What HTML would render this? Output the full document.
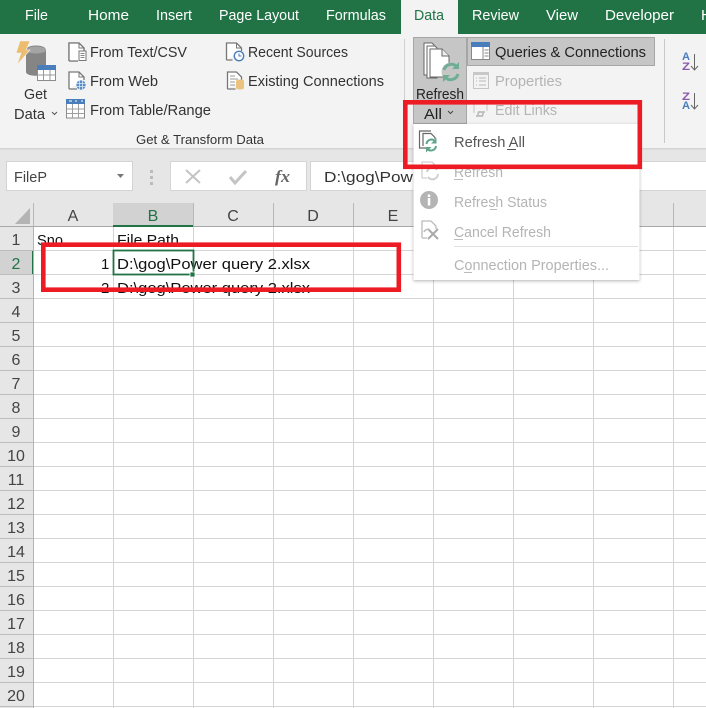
<!DOCTYPE html>
<html>
<head>
<meta charset="utf-8">
<style>
html,body{margin:0;padding:0;background:#fff;width:706px;height:708px;overflow:hidden}
svg{display:block}
text{font-family:"Liberation Sans",sans-serif;font-size:15px;fill:#333;white-space:pre}
.t{fill:#fff}
.g{fill:#b4b4b4}
.c{fill:#111;font-size:15px}
.h{fill:#444;font-size:16px}
</style>
</head>
<body>
<svg width="706" height="708" viewBox="0 0 706 708" xmlns="http://www.w3.org/2000/svg">
<defs>
<filter id="sh" x="-5%" y="-5%" width="110%" height="110%"><feDropShadow dx="0" dy="1" stdDeviation="1.5" flood-color="#000" flood-opacity=".3"/></filter>
</defs>
<rect width="706" height="708" fill="#fff"/>
<!-- title tabs -->
<rect width="706" height="34" fill="#217346"/>
<rect x="401" width="57" height="34" fill="#f3f3f3"/>
<text class="t" x="25" y="20" textLength="23" lengthAdjust="spacingAndGlyphs">File</text>
<text class="t" x="88" y="20" textLength="41" lengthAdjust="spacingAndGlyphs">Home</text>
<text class="t" x="156" y="20" textLength="36" lengthAdjust="spacingAndGlyphs">Insert</text>
<text class="t" x="219" y="20" textLength="80" lengthAdjust="spacingAndGlyphs">Page Layout</text>
<text class="t" x="326" y="20" textLength="60" lengthAdjust="spacingAndGlyphs">Formulas</text>
<text x="414" y="20" textLength="30" lengthAdjust="spacingAndGlyphs" style="fill:#217346">Data</text>
<text class="t" x="472" y="20" textLength="47" lengthAdjust="spacingAndGlyphs">Review</text>
<text class="t" x="546" y="20" textLength="32" lengthAdjust="spacingAndGlyphs">View</text>
<text class="t" x="605" y="20" textLength="69" lengthAdjust="spacingAndGlyphs">Developer</text>
<text class="t" x="701" y="20">H</text>
<!-- ribbon -->
<rect y="34" width="706" height="114" fill="#f3f3f3"/>
<rect y="148" width="706" height="1.5" fill="#d4d4d4"/>
<rect y="149.500" width="706" height="53.500" fill="#e6e6e6"/>
<!-- get data icon -->
<path d="M26 50c0-6 20-6 20 0v22c0 5-20 5-20 0z" fill="#858585"/>
<ellipse cx="36" cy="50" rx="10" ry="3.500" fill="#a4a4a4"/>
<path d="M20 41H30L26 50H30L17 65L21 53H16Z" fill="#ecbd6f" stroke="#f3f3f3" stroke-width=".6"/>
<rect x="37.500" y="65.500" width="18" height="15" fill="#fff" stroke="#8c8c8c"/>
<rect x="37" y="65" width="19" height="5" fill="#4a7ebb"/>
<path d="M37 75h19M43.500 70v10M50 70v10" stroke="#999" fill="none"/>
<text x="24" y="99" textLength="23" lengthAdjust="spacingAndGlyphs">Get</text>
<text x="14" y="119" textLength="31" lengthAdjust="spacingAndGlyphs">Data</text>
<path d="M52 112l2.500 2.500 2.500-2.500" stroke="#555" fill="none"/>
<!-- small doc icons -->
<path d="M69 61V43h10l5 5v3M69 61h9" fill="#fff" stroke="#777" stroke-width="1.300"/>
<path d="M69 43h10l5 5v3h-5v10h-10z" fill="#fff"/>
<path d="M69 61V43h10l5 5v3M69 61h9" fill="none" stroke="#777" stroke-width="1.300"/>
<path d="M79 43v5h5" fill="none" stroke="#777"/>
<rect x="79" y="51" width="7" height="9.500" fill="#fff" stroke="#777"/>
<path d="M80.500 53.500h4M80.500 55.500h4M80.500 57.500h4" stroke="#888"/>
<path d="M69 89V72h10l5 5v3M69 89h8" fill="#fff" stroke="#777" stroke-width="1.300"/>
<path d="M79 72v5h5" fill="none" stroke="#777"/>
<circle cx="81" cy="85" r="4.700" fill="#5a8ec7"/>
<path d="M76.500 83.500h9M76.500 86.500h9M79.500 80.500v9M82.500 80.500v9" stroke="#dbe7f3" stroke-width=".8"/>
<rect x="66.500" y="99.500" width="18" height="18.500" fill="#fff" stroke="#8a8a8a"/>
<rect x="66" y="99" width="19" height="5" fill="#4a7ebb"/>
<path d="M66.500 109h18M66.500 113.500h18M72.500 104v14M78.500 104v14" stroke="#a0a0a0" fill="none"/>
<path d="M69 101l3 0M75 101h2M81 101h2" stroke="#fff"/>
<text x="90" y="57" textLength="97" lengthAdjust="spacingAndGlyphs">From Text/CSV</text>
<text x="90" y="86" textLength="68" lengthAdjust="spacingAndGlyphs">From Web</text>
<text x="90" y="115" textLength="121" lengthAdjust="spacingAndGlyphs">From Table/Range</text>
<path d="M226.500 60V43h10l5 5v3M226.500 60h6" fill="#fff" stroke="#777" stroke-width="1.300"/>
<path d="M236.500 43v5h5" fill="none" stroke="#777"/>
<circle cx="239" cy="56" r="4.700" fill="#fff" stroke="#4a7ebb" stroke-width="1.400"/>
<path d="M239 53.500V56h2.500" stroke="#4a7ebb" fill="none"/>
<path d="M227.500 89V72h9l5 5v3M227.500 89h8" fill="#fff" stroke="#777" stroke-width="1.300"/>
<path d="M230 76h5M230 79h8M230 82h5M230 85h5" stroke="#999"/>
<path d="M236 81c0-2 8-2 8 0v7c0 2-8 2-8 0z" fill="#ebc37e"/>
<text x="248" y="57" textLength="100" lengthAdjust="spacingAndGlyphs">Recent Sources</text>
<text x="248" y="86" textLength="136" lengthAdjust="spacingAndGlyphs">Existing Connections</text>
<text x="136" y="144" textLength="128" lengthAdjust="spacingAndGlyphs" style="font-size:13px">Get &amp; Transform Data</text>
<rect x="404" y="39" width="1" height="104" fill="#d0d0d0"/>
<rect x="664" y="39" width="1" height="104" fill="#c8c8c8"/>
<!-- refresh button -->
<rect x="413.500" y="37.500" width="53" height="86" fill="#c6c6c6" stroke="#a6a6a6"/>
<rect x="414" y="103" width="52" height="1" fill="#a6a6a6"/>
<path d="M424 43h8l2 2v30h-10z" fill="#fff" stroke="#666"/>
<path d="M427 46h8l2 2v30h-10z" fill="#fff" stroke="#666"/>
<path d="M430 49h12l7 7v21h-19z" fill="#fff" stroke="#666" stroke-linejoin="round"/>
<path d="M442 49v7h7" fill="#eee" stroke="#666"/>
<circle cx="451" cy="72" r="9.500" fill="#c6c6c6"/>
<path d="M444 70a7.500 7.500 0 0 1 13-3M458 74a7.500 7.500 0 0 1-13 3" stroke="#6fae95" stroke-width="3" fill="none"/>
<path d="M459 62v7h-7zM443 82v-7h7z" fill="#6fae95"/>
<text x="416" y="99" textLength="48" lengthAdjust="spacingAndGlyphs" style="fill:#222">Refresh</text>
<text x="424" y="119" textLength="18" lengthAdjust="spacingAndGlyphs" style="fill:#222">All</text>
<path d="M448 111l2.500 2.500 2.500-2.500" stroke="#444" fill="none"/>
<!-- queries -->
<rect x="467.500" y="37.500" width="187" height="28" fill="#c6c6c6" stroke="#a6a6a6"/>
<rect x="471.500" y="42.500" width="18" height="17" fill="#fff" stroke="#888"/>
<rect x="471" y="42" width="19" height="5" fill="#4a7ebb"/>
<path d="M483 47v12M484.500 50h4M484.500 53h4M484.500 56h4" stroke="#888" fill="none"/>
<text x="495" y="57" textLength="151" lengthAdjust="spacingAndGlyphs" style="fill:#222">Queries &amp; Connections</text>
<rect x="473.500" y="72.500" width="15" height="16" fill="#f3f3f3" stroke="#c4c4c4"/>
<rect x="473" y="72" width="16" height="3" fill="#c8c8c8"/>
<path d="M476 78h1M476 81h1M476 85h1M479 78h7M479 81h7M479 85h7" stroke="#b8b8b8"/>
<text class="g" x="495" y="86" textLength="67" lengthAdjust="spacingAndGlyphs">Properties</text>
<path d="M474 101v12M487 101v10" fill="none" stroke="#c4c4c4"/>
<path d="M476 116h5a2 2 0 0 0 0-4h-3M485 112h-5a2 2 0 0 0 0 4h3" fill="none" stroke="#bdbdbd" stroke-width="1.800"/>
<text class="g" x="495" y="115" textLength="62" lengthAdjust="spacingAndGlyphs">Edit Links</text>
<!-- sort icons -->
<text x="682" y="60" style="font-size:11px;font-weight:bold;fill:#4a7ebb" textLength="8" lengthAdjust="spacingAndGlyphs">A</text>
<text x="682" y="70" style="font-size:11px;font-weight:bold;fill:#8a5aa8" textLength="8" lengthAdjust="spacingAndGlyphs">Z</text>
<path d="M694.500 54v16M691 66l3.500 4 3.500-4" stroke="#666" fill="none"/>
<text x="682" y="100" style="font-size:11px;font-weight:bold;fill:#8a5aa8" textLength="8" lengthAdjust="spacingAndGlyphs">Z</text>
<text x="682" y="109" style="font-size:11px;font-weight:bold;fill:#4a7ebb" textLength="8" lengthAdjust="spacingAndGlyphs">A</text>
<path d="M694.500 93v16M691 105l3.500 4 3.500-4" stroke="#666" fill="none"/>
<!-- formula bar -->
<rect x="6.500" y="161.500" width="126" height="29" fill="#fff" stroke="#d4d4d4"/>
<text x="14" y="182" textLength="33" lengthAdjust="spacingAndGlyphs" style="fill:#444">FileP</text>
<path d="M117 174h7l-3.500 4z" fill="#777"/>
<path d="M150 170h3v3h-3zM150 176h3v3h-3zM150 182h3v3h-3z" fill="#bbb"/>
<rect x="170.500" y="161.500" width="136" height="29" fill="#fff" stroke="#d4d4d4"/>
<path d="M186 170l14 13M200 170l-14 13" stroke="#c4c4c4" stroke-width="2" fill="none"/>
<path d="M230 177l5 6 11-12" stroke="#c4c4c4" stroke-width="3" fill="none"/>
<text x="275" y="182" style="font-family:'Liberation Serif',serif;font-style:italic;font-weight:bold;font-size:17px;fill:#666" textLength="15" lengthAdjust="spacingAndGlyphs">fx</text>
<rect x="310.500" y="161.500" width="400" height="29" fill="#fff" stroke="#d4d4d4"/>
<text x="324" y="182" textLength="89" lengthAdjust="spacingAndGlyphs" style="fill:#333">D:\gog\Pow</text>
<!-- column header -->
<rect y="203" width="706" height="24" fill="#e6e6e6"/>
<rect x="113" y="203" width="80" height="23" fill="#d2d2d2"/>
<rect x="113" y="225" width="80" height="2" fill="#217346"/>
<path d="M30 224V208L15 224z" fill="#b4b4b4"/>
<path d="M33.500 203V226M193.500 203V226M273.500 203V226M353.500 203V226M433.500 203V226M513.500 203V226M593.500 203V226M673.500 203V226" stroke="#b8b8b8"/>
<rect y="226" width="113" height="1" fill="#a8a8a8"/>
<rect x="193" y="226" width="513" height="1" fill="#a8a8a8"/>
<!-- row header -->
<rect y="227" width="33" height="481" fill="#e6e6e6"/>
<rect y="250" width="33" height="24" fill="#d2d2d2"/>
<rect x="32" y="250" width="2" height="24" fill="#217346"/>
<!-- grid -->
<path d="M113.500 227V708M193.500 227V708M273.500 227V708M353.500 227V708M433.500 227V708M513.500 227V708M593.500 227V708M673.500 227V708" stroke="#d4d4d4"/>
<path d="M33 250.500H706M33 274.500H706M33 298.500H706M33 322.500H706M33 346.500H706M33 370.500H706M33 394.500H706M33 418.500H706M33 442.500H706M33 466.500H706M33 490.500H706M33 514.500H706M33 538.500H706M33 562.500H706M33 586.500H706M33 610.500H706M33 634.500H706M33 658.500H706M33 682.500H706M33 706.500H706" stroke="#d4d4d4"/>
<path d="M0 250.500H33M0 274.500H33M0 298.500H33M0 322.500H33M0 346.500H33M0 370.500H33M0 394.500H33M0 418.500H33M0 442.500H33M0 466.500H33M0 490.500H33M0 514.500H33M0 538.500H33M0 562.500H33M0 586.500H33M0 610.500H33M0 634.500H33M0 658.500H33M0 682.500H33M0 706.500H33" stroke="#bdbdbd"/>
<rect x="33" y="227" width="1" height="481" fill="#b4b4b4"/>
<!-- headers text -->
<g>
<text class="h" x="73" y="221" text-anchor="middle">A</text>
<text class="h" x="153" y="221" text-anchor="middle" style="fill:#217346">B</text>
<text class="h" x="233" y="221" text-anchor="middle">C</text>
<text class="h" x="313" y="221" text-anchor="middle">D</text>
<text class="h" x="393" y="221" text-anchor="middle">E</text>
<text class="h" x="16" y="245" text-anchor="middle">1</text>
<text class="h" x="16" y="269" text-anchor="middle" style="fill:#217346">2</text>
<text class="h" x="16" y="293" text-anchor="middle">3</text>
<text class="h" x="16" y="317" text-anchor="middle">4</text>
<text class="h" x="16" y="341" text-anchor="middle">5</text>
<text class="h" x="16" y="365" text-anchor="middle">6</text>
<text class="h" x="16" y="389" text-anchor="middle">7</text>
<text class="h" x="16" y="413" text-anchor="middle">8</text>
<text class="h" x="16" y="437" text-anchor="middle">9</text>
<text class="h" x="16" y="461" text-anchor="middle">10</text>
<text class="h" x="16" y="485" text-anchor="middle">11</text>
<text class="h" x="16" y="509" text-anchor="middle">12</text>
<text class="h" x="16" y="533" text-anchor="middle">13</text>
<text class="h" x="16" y="557" text-anchor="middle">14</text>
<text class="h" x="16" y="581" text-anchor="middle">15</text>
<text class="h" x="16" y="605" text-anchor="middle">16</text>
<text class="h" x="16" y="629" text-anchor="middle">17</text>
<text class="h" x="16" y="653" text-anchor="middle">18</text>
<text class="h" x="16" y="677" text-anchor="middle">19</text>
<text class="h" x="16" y="701" text-anchor="middle">20</text>
</g>
<!-- cells -->
<text class="c" x="37" y="245" textLength="26" lengthAdjust="spacingAndGlyphs">Sno</text>
<text class="c" x="117" y="245" textLength="62" lengthAdjust="spacingAndGlyphs">File Path</text>
<text class="c" x="117" y="269" textLength="193" lengthAdjust="spacingAndGlyphs">D:\gog\Power query 2.xlsx</text>
<text class="c" x="101" y="269">1</text>
<text class="c" x="101" y="293">2</text>
<text class="c" x="117" y="293" textLength="193" lengthAdjust="spacingAndGlyphs">D:\gog\Power query 2.xlsx</text>
<rect x="113.500" y="250.500" width="80" height="24" fill="none" stroke="#217346" stroke-width="1.800"/>
<rect x="190" y="272" width="5" height="5" fill="#217346" stroke="#fff" stroke-width=".8"/>
<!-- dropdown menu -->
<rect x="413.500" y="124" width="226" height="156" fill="#fff" filter="url(#sh)"/>
<path d="M431 131H419.500V148H426" fill="none" stroke="#666" stroke-width="1.200"/>
<path d="M423 146V133.500H431L435 137.500V139" fill="none" stroke="#666" stroke-width="1.200"/>
<path d="M426.500 144a5 5 0 0 1 8.500-3M436 146a5 5 0 0 1-8.500 3" stroke="#5fa58a" stroke-width="2" fill="none"/>
<path d="M436.500 138v5.500h-5.500zM426 152.500v-5.500h5.500z" fill="#5fa58a"/>
<text x="454" y="147" textLength="71" lengthAdjust="spacingAndGlyphs" style="fill:#555">Refresh All</text>
<rect x="507" y="149" width="9" height="1" fill="#555"/>
<path d="M422 178v-16h10l4 4v2M422 178h5" fill="none" stroke="#cfcfcf" stroke-width="1.300"/>
<path d="M427 172a5.500 5.500 0 0 1 10-2M438 174a5.500 5.500 0 0 1-10 3" stroke="#cfcfcf" stroke-width="2" fill="none"/>
<text class="g" x="454" y="177" textLength="49" lengthAdjust="spacingAndGlyphs">Refresh</text>
<rect x="454" y="179" width="9" height="1" fill="#bbb"/>
<circle cx="429" cy="200" r="9" fill="#b4b4b4"/>
<rect x="427.800" y="198" width="2.500" height="7.500" fill="#fff"/>
<rect x="427.800" y="194.500" width="2.500" height="2.500" fill="#fff"/>
<text class="g" x="454" y="207" textLength="93" lengthAdjust="spacingAndGlyphs">Refresh Status</text>
<rect x="490" y="209" width="7" height="1" fill="#bbb"/>
<path d="M422 238v-17h9l5 5v3M422 238h5" fill="none" stroke="#bbb" stroke-width="1.300"/>
<path d="M428 229l10 10M438 229l-10 10" stroke="#aaa" stroke-width="2"/>
<path d="M424 232a4 4 0 0 1 6-2" stroke="#bbb" stroke-width="1.500" fill="none"/>
<text class="g" x="454" y="237" textLength="97" lengthAdjust="spacingAndGlyphs">Cancel Refresh</text>
<rect x="454" y="239" width="9" height="1" fill="#bbb"/>
<rect x="454" y="246" width="184" height="1" fill="#e0e0e0"/>
<text class="g" x="454" y="270" textLength="155" lengthAdjust="spacingAndGlyphs">Connection Properties...</text>
<rect x="464" y="272" width="8" height="1" fill="#bbb"/>
<!-- red annotations -->
<rect x="405.300" y="102.300" width="234.500" height="64.500" fill="none" stroke="#ed1c24" stroke-width="4.600"/>
<rect x="43.300" y="244.700" width="355.500" height="45" fill="none" stroke="#ed1c24" stroke-width="4.600"/>
</svg>
</body>
</html>
